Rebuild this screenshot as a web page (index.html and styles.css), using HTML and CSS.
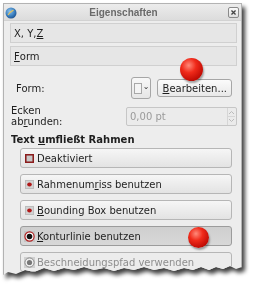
FILE: index.html
```html
<!DOCTYPE html>
<html>
<head>
<meta charset="utf-8">
<link rel="stylesheet" href="styles.css">
</head>
<body>
<div class="page">
  <div class="shadow">
    <div class="win">
      <div class="titlebar">
        <svg class="globe" width="12" height="12" viewBox="0 0 12 12">
          <defs>
            <radialGradient id="g1" cx="0.4" cy="0.35" r="0.7">
              <stop offset="0" stop-color="#8fc3ec"/>
              <stop offset="0.6" stop-color="#3a7fc0"/>
              <stop offset="1" stop-color="#1d4f8a"/>
            </radialGradient>
          </defs>
          <circle cx="6" cy="6" r="5.5" fill="url(#g1)"/>
          <path d="M3 8 Q5 5 8.5 3" stroke="#e8c35a" stroke-width="1.2" fill="none"/>
        </svg>
        <div class="title">Eigenschaften</div>
        <div class="close">
          <svg width="11" height="11" viewBox="0 0 11 11"><path d="M3 3 L8 8 M8 3 L3 8" stroke="#444" stroke-width="1.6"/></svg>
        </div>
      </div>
      <div class="content">
        <div class="exp">X, Y, <u>Z</u></div>
        <div class="exp"><u>F</u>orm</div>
        <div class="form-row">
          <span class="form-lbl">Form:</span>
          <div class="form-btns">
            <div class="colorbtn"><span class="swatch"></span><span class="caret">&#8964;</span></div>
            <div class="btn"><u>B</u>earbeiten...</div>
          </div>
        </div>
        <div class="ecken-row">
          <div class="ecken-lbl">Ecken<br>ab<u>r</u>unden:</div>
          <div class="spin">
            <span class="spin-val">0,00 pt</span>
            <span class="spin-arrows">
              <svg width="7" height="17" viewBox="0 0 7 17"><path d="M1 6 L3.5 3.5 L6 6" stroke="#bbb" fill="none"/><path d="M0 8.5 H7" stroke="#d6d6d6"/><path d="M1 11 L3.5 13.5 L6 11" stroke="#bbb" fill="none"/></svg>
            </span>
          </div>
        </div>
        <div class="section">Text <u>u</u>mfließt Rahmen</div>
        <div class="opts">
          <div class="opt">
            <svg class="ico" width="9" height="9" viewBox="0 0 9 9"><rect x="0.75" y="0.75" width="7.5" height="7.5" fill="#b9b9b9" stroke="#8c1c1c" stroke-width="1.5"/><rect x="2" y="2" width="5" height="5" fill="#c8c8c8"/></svg>
            <span>Deaktiviert</span>
          </div>
          <div class="opt">
            <svg class="ico" width="9" height="9" viewBox="0 0 9 9"><rect x="0.5" y="0.5" width="8" height="8" fill="#d2d2d2" stroke="#bdbdbd"/><ellipse cx="4.5" cy="4.5" rx="2.3" ry="2" fill="#b01818"/></svg>
            <span>Rahmenum<u>r</u>iss benutzen</span>
          </div>
          <div class="opt">
            <svg class="ico" width="9" height="9" viewBox="0 0 9 9"><rect x="0.5" y="0.5" width="8" height="8" fill="#d2d2d2" stroke="#bdbdbd"/><ellipse cx="4.5" cy="4.5" rx="2.3" ry="2" fill="#b01818"/></svg>
            <span><u>B</u>ounding Box benutzen</span>
          </div>
          <div class="opt active">
            <svg class="ico ico-radio" width="11" height="11" viewBox="0 0 11 11"><rect x="0" y="0" width="11" height="11" fill="#c4c4c4"/><circle cx="5.5" cy="5.5" r="4.6" fill="#fff" stroke="#b02020" stroke-width="1.2"/><circle cx="5.5" cy="5.5" r="2.8" fill="#111"/></svg>
            <span><u>K</u>onturlinie benutzen</span>
          </div>
          <div class="opt disabled">
            <svg class="ico ico-radio" width="11" height="11" viewBox="0 0 11 11"><rect x="0" y="0" width="11" height="11" fill="#d0d0d0"/><circle cx="5.5" cy="5.5" r="4.6" fill="#eee" stroke="#888" stroke-width="1"/><circle cx="5.5" cy="5.5" r="2.6" fill="#777"/></svg>
            <span>Beschneidungspfad verwenden</span>
          </div>
        </div>
      </div>
    </div>
  </div>
  <div class="ball ball1"></div>
  <div class="ball ball2"></div>
</div>
</body>
</html>
```
FILE: styles.css
```css
html, body {
  margin: 0;
  padding: 0;
  background: #fff;
}
body {
  font-family: "DejaVu Sans", sans-serif;
  font-size: 10px;
  color: #1e1e1e;
}
u {
  text-decoration: underline;
  text-underline-offset: 1px;
}
.page {
  position: relative;
  width: 258px;
  height: 293px;
  padding: 3px 0 0 3px;
  box-sizing: border-box;
  overflow: hidden;
}
.shadow {
  width: 239px;
  filter: drop-shadow(3px 4px 2px rgba(0, 0, 0, 0.75));
}
.win {
  width: 239px;
  height: 276px;
  box-sizing: border-box;
  background: #ededed;
  border: 1px solid #b3b3b3;
  clip-path: polygon(0 0, 239px 0, 239px 264px, 233px 266px, 227px 263px, 220px 266px, 213px 264px, 206px 267px, 198px 264px, 190px 267px, 181px 265px, 171px 268px, 161px 265px, 151px 267px, 141px 264px, 131px 267px, 121px 265px, 111px 268px, 101px 265px, 91px 267px, 81px 264px, 71px 267px, 61px 265px, 51px 268px, 41px 265px, 31px 269px, 22px 267px, 13px 271px, 5px 269px, 0 272px);
}
.titlebar {
  height: 16px;
  display: flex;
  align-items: center;
  padding: 0 2px 0 1px;
  background: linear-gradient(#ececec, #dcdcdc);
  border-bottom: 1px solid #d2d2d2;
}
.globe {
  flex: none;
  margin-top: 2px;
}
.title {
  flex: 1;
  text-align: center;
  font-family: "Liberation Sans", sans-serif;
  font-weight: bold;
  font-size: 10px;
  color: #6a6a6a;
  padding-left: 2px;
}
.close {
  width: 11px;
  height: 11px;
  box-sizing: border-box;
  border: 1px solid #8a8a8a;
  border-radius: 2px;
  background: linear-gradient(#fafafa, #dedede);
  display: flex;
  align-items: center;
  justify-content: center;
}
.close svg {
  width: 9px;
  height: 9px;
}
.content {
  padding: 2px 4px 0 6px;
}
.exp {
  height: 20px;
  box-sizing: border-box;
  border: 1px solid #d0d0d0;
  background: #e6e6e6;
  padding-left: 3px;
  display: flex;
  align-items: center;
  margin-bottom: 3px;
}
.form-row {
  height: 22px;
  margin-top: 11px;
  display: flex;
  align-items: center;
  justify-content: space-between;
  padding: 0 5px 0 6px;
}
.form-btns {
  display: flex;
  align-items: center;
  gap: 6px;
}
.colorbtn {
  width: 20px;
  height: 22px;
  box-sizing: border-box;
  border: 1px solid #a6a6a6;
  border-radius: 3px;
  background: linear-gradient(#f8f8f8, #e6e6e6);
  display: flex;
  align-items: center;
  padding-left: 2px;
}
.swatch {
  width: 11px;
  height: 11px;
  box-sizing: border-box;
  border: 1px solid #a8a8a8;
  background: #f4f4f4;
}
.caret {
  font-size: 8px;
  line-height: 8px;
  margin-left: 1px;
  margin-top: -3px;
  color: #333;
}
.btn {
  height: 18px;
  box-sizing: border-box;
  border: 1px solid #a6a6a6;
  border-radius: 3px;
  background: linear-gradient(#fbfbfb, #e8e8e8);
  padding: 0 4px 0 5px;
  display: flex;
  align-items: center;
}
.ecken-row {
  height: 22px;
  margin-top: 6px;
  display: flex;
  align-items: center;
  justify-content: space-between;
  padding-left: 1px;
}
.ecken-lbl {
  line-height: 11px;
}
.spin {
  width: 111px;
  height: 19px;
  box-sizing: border-box;
  border: 1px solid #c6c6c6;
  border-radius: 2px;
  background: #ebebeb;
  display: flex;
  align-items: center;
  justify-content: space-between;
  padding-left: 3px;
  color: #9a9a9a;
}
.spin-arrows {
  width: 8px;
  height: 17px;
  border-left: 1px solid #d6d6d6;
  display: flex;
}
.section {
  margin-top: 7px;
  font-weight: bold;
  line-height: 12px;
  padding-left: 1px;
}
.opts {
  margin: 2px 5px 0 10px;
  display: flex;
  flex-direction: column;
  gap: 6px;
}
.opt {
  height: 20px;
  box-sizing: border-box;
  border: 1px solid #b6b6b6;
  border-radius: 3px;
  background: linear-gradient(#f6f6f6, #e3e3e3);
  display: flex;
  align-items: center;
  padding-left: 4px;
  gap: 3px;
}
.opt .ico {
  flex: none;
  margin-right: 0;
}
.opt .ico-radio {
  margin-left: -1px;
  margin-right: -1px;
}
.opt.active {
  background: linear-gradient(#cfcfcf, #d8d8d8);
  border-color: #9c9c9c;
}
.opt.disabled {
  color: #8e8e8e;
  background: #ececec;
}
.ball {
  position: absolute;
  border-radius: 50%;
  background: radial-gradient(circle at 38% 32%, #ff8a7a 0%, #f02a1a 35%, #c40e06 70%, #8a0500 100%);
  box-shadow: 1px 2px 2px rgba(0, 0, 0, 0.35);
}
.ball1 {
  left: 180px;
  top: 58px;
  width: 23px;
  height: 23px;
}
.ball2 {
  left: 188px;
  top: 227px;
  width: 21px;
  height: 21px;
}
```
